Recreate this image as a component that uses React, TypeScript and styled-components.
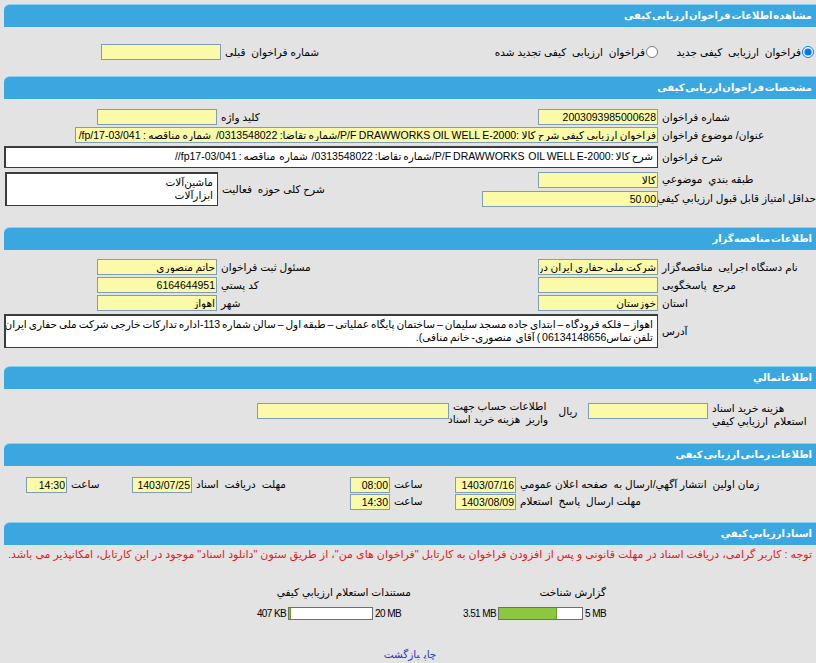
import React from "react";
import styled, { createGlobalStyle } from "styled-components";

const GlobalStyle = createGlobalStyle`
  html, body {
    margin: 0;
    padding: 0;
    background: #e3e3e3;
    overflow: hidden;
  }
  body {
    direction: rtl;
    font-family: "Liberation Sans", "DejaVu Sans", sans-serif;
    font-size: 10.5px;
    color: #000;
  }
`;

const Page = styled.div`
  padding: 4px 0 0 4px;
`;

const SectionHeader = styled.div`
  height: 23px;
  box-sizing: border-box;
  background: #3ba7e0;
  border-top: 1px solid #8ad0f3;
  border-top-left-radius: 6px;
  color: #ffffff;
  font-weight: bold;
  font-size: 10px;
  word-spacing: -2px;
  line-height: 21px;
  padding-right: 4px;
  white-space: nowrap;
`;

const SectionBody = styled.div<{ $pt: number; $pb: number }>`
  padding: ${(p) => p.$pt}px 0 ${(p) => p.$pb}px;
`;

const Row = styled.div<{ $h: number }>`
  display: flex;
  align-items: center;
  height: ${(p) => p.$h}px;
`;

const Label = styled.div<{ $w: number; $center?: boolean; $mt?: number; $pl?: number }>`
  flex: none;
  width: ${(p) => p.$w}px;
  box-sizing: border-box;
  padding-left: ${(p) => (p.$center ? 0 : p.$pl ?? 4)}px;
  margin-top: ${(p) => p.$mt || 0}px;
  text-align: ${(p) => (p.$center ? "center" : "left")};
  white-space: nowrap;
  line-height: 13px;
`;

const Field = styled.input<{ $w: number }>`
  flex: none;
  width: ${(p) => p.$w}px;
  height: 16px;
  box-sizing: border-box;
  margin: 0;
  padding: 0 1px;
  border: 1px solid #7f9db9;
  background: #fbfaa9;
  font: inherit;
  word-spacing: -0.5px;
  color: #000;
  direction: rtl;
  outline: none;
`;

const TextBox = styled.div<{ $w: number; $h: number }>`
  flex: none;
  width: ${(p) => p.$w}px;
  height: ${(p) => p.$h}px;
  box-sizing: border-box;
  background: #ffffff;
  border: 1px solid #3c3c3c;
  border-left-width: 2px;
  border-top-width: 2px;
  padding: 2px 4px 2px 3px;
  line-height: 13px;
  word-spacing: -1px;
  overflow: hidden;
  white-space: nowrap;
`;

const Group = styled.div`
  display: flex;
  align-items: flex-start;
`;

const Stack = styled.div`
  display: flex;
  flex-direction: column;
`;

const RadioCell = styled.label<{ $w: number }>`
  flex: none;
  width: ${(p) => p.$w}px;
  display: flex;
  align-items: center;
  gap: 1px;
  padding-right: 2px;
  box-sizing: border-box;
  white-space: nowrap;
  input {
    margin: 0;
    width: 12px;
    height: 12px;
  }
`;

const Note = styled.div`
  color: #e01b1b;
  font-size: 11px;
  line-height: 14px;
  padding-right: 4px;
  white-space: nowrap;
`;

const DocsRow = styled.div`
  display: flex;
  gap: 52px;
  padding-right: 210px;
  margin-top: 24px;
`;

const DocColumn = styled.div`
  display: flex;
  flex-direction: column;
  align-items: flex-start;
  gap: 8px;
`;

const DocTitle = styled.div`
  line-height: 14px;
  white-space: nowrap;
`;

const BarRow = styled.div<{ $offset?: number }>`
  direction: ltr;
  display: flex;
  align-items: center;
  gap: 2px;
  margin-right: ${(p) => p.$offset || 0}px;
  white-space: nowrap;
  font-size: 10px;
  letter-spacing: -0.6px;
`;

const Bar = styled.div`
  width: 85px;
  height: 13px;
  box-sizing: border-box;
  border: 1px solid #6f6f6f;
  background: #ffffff;
  display: flex;
`;

const BarFill = styled.div`
  height: 100%;
  background: #8dc63f;
  border-right: 1px solid #6a9a2a;
  box-sizing: border-box;
`;

const Links = styled.div`
  text-align: center;
  margin-top: 27px;
  line-height: 14px;
  a {
    color: #3333cc;
    text-decoration: none;
    margin: 0 2px;
  }
`;

const docs = [
  { title: "گزارش شناخت", used: "3.51 MB", max: "5 MB", pct: 70.2, offset: 0 },
  { title: "مستندات استعلام ارزیابي کیفي", used: "407 KB", max: "20 MB", pct: 2, offset: 10 },
];

export default function App() {
  return (
    <>
      <GlobalStyle />
      <Page>
        <SectionHeader>مشاهده اطلاعات فراخوان ارزیابی کیفی</SectionHeader>
        <SectionBody $pt={16} $pb={15}>
          <Row $h={18}>
            <RadioCell $w={156}>
              <input type="radio" name="kind" defaultChecked />
              فراخوان&nbsp; ارزیابی&nbsp; کیفی جدید
            </RadioCell>
            <RadioCell $w={176}>
              <input type="radio" name="kind" />
              فراخوان&nbsp; ارزیابی&nbsp; کیفی تجدید شده
            </RadioCell>
            <Label $w={263}>شماره فراخوان&nbsp; قبلی</Label>
            <Field $w={120} readOnly value="" />
          </Row>
        </SectionBody>

        <SectionHeader>مشخصات فراخوان ارزیابی کیفی</SectionHeader>
        <SectionBody $pt={9} $pb={19}>
          <Row $h={18}>
            <Label $w={158}>شماره فراخوان</Label>
            <Field $w={120} readOnly value="2003093985000628" />
            <Label $w={321}>کلید واژه</Label>
            <Field $w={120} readOnly value="" />
          </Row>
          <Row $h={18}>
            <Label $w={158}>عنوان/ موضوع فراخوان</Label>
            <Field
              $w={583}
              readOnly
              value="فراخوان ارزیابی کیفی شرح کالا :P/F DRAWWORKS OIL WELL E-2000/شماره تقاضا: 0313548022/  شماره مناقصه : fp/17-03/041/"
            />
          </Row>
          <Row $h={26}>
            <Label $w={158}>شرح فراخوان</Label>
            <TextBox $w={654} $h={22}>
              شرح کالا :P/F DRAWWORKS&nbsp; OIL WELL E-2000/شماره تقاضا: 0313548022/&nbsp; شماره&nbsp; مناقصه : fp17-03/041//
            </TextBox>
          </Row>
          <Group>
            <Stack>
              <Row $h={19}>
                <Label $w={158}>طبقه بندي&nbsp; موضوعي</Label>
                <Field $w={120} readOnly value="کالا" />
              </Row>
              <Row $h={19}>
                <Label $w={158} $pl={1}>حداقل امتیاز قابل قبول ارزیابي کیفي</Label>
                <Field $w={176} readOnly value="50.00" />
              </Row>
            </Stack>
            <Row $h={38}>
              <Label $w={264}>شرح کلی حوزه&nbsp; فعالیت</Label>
              <TextBox $w={213} $h={34}>
                ماشین‌آلات
                <br />
                ابزارآلات
              </TextBox>
            </Row>
          </Group>
        </SectionBody>

        <SectionHeader>اطلاعات مناقصه‌گزار</SectionHeader>
        <SectionBody $pt={8} $pb={16}>
          <Row $h={18}>
            <Label $w={158}>نام دستگاه اجرایی&nbsp; مناقصه‌گزار</Label>
            <Field $w={120} readOnly value="شرکت ملی حفاری ایران در" />
            <Label $w={321}>مسئول ثبت فراخوان</Label>
            <Field $w={120} readOnly value="حاتم منصوری" />
          </Row>
          <Row $h={18}>
            <Label $w={158}>مرجع&nbsp; پاسخگویی</Label>
            <Field $w={120} readOnly value="" />
            <Label $w={321}>کد پستي</Label>
            <Field $w={120} readOnly value="6164644951" />
          </Row>
          <Row $h={18}>
            <Label $w={158}>استان</Label>
            <Field $w={120} readOnly value="خوزستان" />
            <Label $w={321}>شهر</Label>
            <Field $w={120} readOnly value="اهواز" />
          </Row>
          <Row $h={38}>
            <Label $w={158}>آدرس</Label>
            <TextBox $w={654} $h={34}>
              اهواز – فلکه فرودگاه – ابتدای جاده مسجد سلیمان – ساختمان پایگاه عملیاتی – طبقه اول – سالن شماره 113-اداره تدارکات خارجی شرکت ملی حفاری ایران
              <br />
              تلفن تماس06134148656 ) آقای&nbsp; منصوری- خانم منافی).
            </TextBox>
          </Row>
        </SectionBody>

        <SectionHeader>اطلاعاتمالي</SectionHeader>
        <SectionBody $pt={8} $pb={18}>
          <Row $h={28}>
            <Label $w={108} $mt={8}>
              هزینه خرید اسناد
              <br />
              استعلام&nbsp; ارزیابي کیفي
            </Label>
            <Field $w={120} readOnly value="" />
            <Label $w={40} $center>
              ریال
            </Label>
            <Label $w={99} $mt={4}>
              اطلاعات حساب جهت
              <br />
              واریز&nbsp; هزینه خرید اسناد
            </Label>
            <Field $w={192} readOnly value="" />
          </Row>
        </SectionBody>

        <SectionHeader>اطلاعات زمانی ارزیابی کیفی</SectionHeader>
        <SectionBody $pt={10} $pb={12}>
          <Row $h={17}>
            <Label $w={300}>زمان اولین&nbsp; انتشار آگهي/ارسال به&nbsp; صفحه اعلان عمومي</Label>
            <Field $w={61} readOnly value="1403/07/16" />
            <Label $w={65}>ساعت</Label>
            <Field $w={40} readOnly value="08:00" />
            <Label $w={158}>مهلت&nbsp; دریافت&nbsp; اسناد</Label>
            <Field $w={60} readOnly value="1403/07/25" />
            <Label $w={65}>ساعت</Label>
            <Field $w={41} readOnly value="14:30" />
          </Row>
          <Row $h={17}>
            <Label $w={300}>مهلت ارسال&nbsp; پاسخ&nbsp; استعلام</Label>
            <Field $w={61} readOnly value="1403/08/09" />
            <Label $w={65}>ساعت</Label>
            <Field $w={40} readOnly value="14:30" />
          </Row>
        </SectionBody>

        <SectionHeader>اسناد ارزیابي کیفي</SectionHeader>
        <SectionBody $pt={2} $pb={0}>
          <Note>
            توجه : کاربر گرامی، دریافت اسناد در مهلت قانونی و پس از افزودن فراخوان به کارتابل "فراخوان های من"، از طریق ستون "دانلود اسناد" موجود در این کارتابل، امکانپذیر می باشد.
          </Note>
          <DocsRow>
            {docs.map((d) => (
              <DocColumn key={d.title}>
                <DocTitle>{d.title}</DocTitle>
                <BarRow $offset={d.offset}>
                  <span>{d.used}</span>
                  <Bar>
                    <BarFill style={{ width: `${d.pct}%` }} />
                  </Bar>
                  <span>{d.max}</span>
                </BarRow>
              </DocColumn>
            ))}
          </DocsRow>
          <Links>
            <a href="#">چاپ</a>
            <a href="#">بازگشت</a>
          </Links>
        </SectionBody>
      </Page>
    </>
  );
}
